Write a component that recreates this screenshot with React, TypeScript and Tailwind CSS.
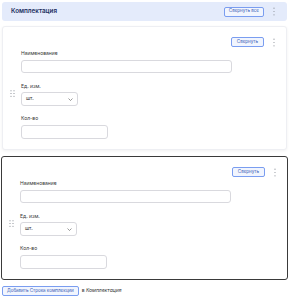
import React from "react";

function Kebab() {
  return (
    <svg width="4" height="9" viewBox="0 0 4 9" className="shrink-0">
      <circle cx="2" cy="1.2" r="0.6" fill="#8b9099" />
      <circle cx="2" cy="4.5" r="0.6" fill="#8b9099" />
      <circle cx="2" cy="7.8" r="0.6" fill="#8b9099" />
    </svg>
  );
}

function Grip() {
  return (
    <svg width="5" height="7" viewBox="0 0 5 7">
      {[0.8, 3.5, 6.2].map((y) => (
        <React.Fragment key={y}>
          <circle cx="1" cy={y} r="0.55" fill="#7b8089" />
          <circle cx="4" cy={y} r="0.55" fill="#7b8089" />
        </React.Fragment>
      ))}
    </svg>
  );
}

const btn =
  "h-[10px] px-[4px] rounded-[2px] border border-[#7a9df0] bg-[#f1f5fe] text-[4.5px] text-[#3559b5] leading-none";

function Card({ active }: { active?: boolean }) {
  return (
    <div
      className={
        "relative rounded-[3px] bg-white h-[124px] " +
        (active
          ? "border border-[#3a3a3a]"
          : "border border-[#eeeff3] shadow-[0_1px_3px_rgba(0,0,0,0.06)]")
      }
    >
      <div className="absolute left-[7px] top-[63px]">
        <Grip />
      </div>
      <div className="flex justify-end items-center pt-[10px] pr-[10px] gap-[8px]">
        <button className={btn + " px-[5px]"}>Свернуть</button>
        <Kebab />
      </div>
      <div className="pl-[18px] flex flex-col">
        <div className="text-[5px] text-[#333] leading-none mt-[4px]">Наименование</div>
        <div className="mt-[4px] w-[211px] h-[13px] rounded-[3px] border border-[#d9d9de]" />
        <div className="text-[5px] text-[#333] leading-none mt-[11px]">Ед. изм.</div>
        <div className="mt-[3px] w-[57px] h-[14px] rounded-[3px] border border-[#d9d9de] flex items-center justify-between px-[4px]">
          <span className="text-[5px] text-[#333]">шт.</span>
          <svg width="5" height="3" viewBox="0 0 5 3">
            <path d="M0.5 0.5 L2.5 2.5 L4.5 0.5" stroke="#555" strokeWidth="0.6" fill="none" />
          </svg>
        </div>
        <div className="text-[5px] text-[#333] leading-none mt-[10px]">Кол-во</div>
        <div className="mt-[4px] w-[87px] h-[14px] rounded-[3px] border border-[#d9d9de]" />
      </div>
    </div>
  );
}

export default function App() {
  return (
    <div
      className="w-[289px] h-[300px] bg-white px-[1px] pt-[2px]"
      style={{ fontFamily: "Inter, 'Noto Sans', sans-serif" }}
    >
      <div className="mx-[1px] h-[19px] rounded-[3px] bg-[#e4ebfb] flex items-center pl-[9px] pr-[11px]">
        <span className="text-[6.3px] font-semibold text-[#1d2f5f]">Комплектация</span>
        <div className="ml-auto flex items-center gap-[8px]">
          <button className={btn}>Свернуть все</button>
          <Kebab />
        </div>
      </div>
      <div className="mt-[5px] mx-[1px]">
        <Card />
      </div>
      <div className="mt-[6px]">
        <Card active />
      </div>
      <div className="mt-[6px] flex items-center gap-[3px] pl-[1px]">
        <button className={btn}>Добавить Строка комплекции</button>
        <span className="text-[5px] text-[#333]">
          в <i>Комплектация</i>
        </span>
      </div>
    </div>
  );
}
